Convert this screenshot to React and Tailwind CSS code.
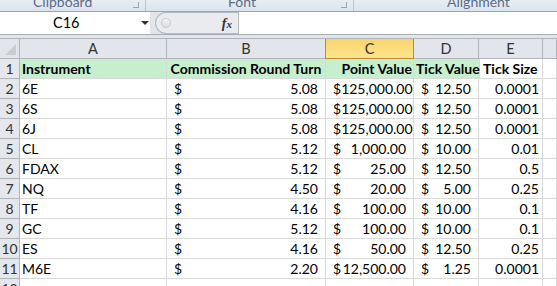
const rows = [
  ["6E", "5.08", "125,000.00", "12.50", "0.0001"],
  ["6S", "5.08", "125,000.00", "12.50", "0.0001"],
  ["6J", "5.08", "125,000.00", "12.50", "0.0001"],
  ["CL", "5.12", "1,000.00", "10.00", "0.01"],
  ["FDAX", "5.12", "25.00", "12.50", "0.5"],
  ["NQ", "4.50", "20.00", "5.00", "0.25"],
  ["TF", "4.16", "100.00", "10.00", "0.1"],
  ["GC", "5.12", "100.00", "10.00", "0.1"],
  ["ES", "4.16", "50.00", "12.50", "0.25"],
  ["M6E", "2.20", "12,500.00", "1.25", "0.0001"],
];

const cols = "grid grid-cols-[20px_147px_159px_88px_65px_64px_1fr]";
const cell = "h-[20px] border-r border-b border-[#d9d9d9] flex items-center overflow-visible whitespace-nowrap";
const rowHead =
  "h-[20px] border-r border-b border-[#b1b5ba] bg-[#e4e7ec] flex items-center justify-center text-[#333]";

function Money({ v }) {
  return (
    <div className={cell + " justify-between pl-[7px] pr-[7px]"}>
      <span>$</span>
      <span>{v}</span>
    </div>
  );
}

function App() {
  return (
    <div className="w-[557px] h-[286px] overflow-hidden bg-white font-['Lato',sans-serif] text-[14px] text-black">
      {/* ribbon group labels, cut off at the top */}
      <div className="h-[12px] flex bg-gradient-to-b from-[#e9eef5] to-[#dbe3ee] border-b border-[#9aa5b5] overflow-hidden text-[#5a6b86] text-[14px] leading-none">
        <div className="w-[146px] flex border-r border-[#b8c3d2] relative">
          <span className="pl-[33px] -mt-[5px]">Clipboard</span>
          <span className="absolute right-[6px] top-[2px] w-[6px] h-[6px] border-r border-b border-[#9aa5b5]"></span>
        </div>
        <div className="w-[208px] flex border-r border-[#b8c3d2] relative">
          <span className="pl-[82px] -mt-[5px]">Font</span>
          <span className="absolute right-[6px] top-[2px] w-[6px] h-[6px] border-r border-b border-[#9aa5b5]"></span>
        </div>
        <div className="flex-1 flex">
          <span className="pl-[93px] -mt-[5px]">Alignment</span>
        </div>
      </div>

      {/* formula bar */}
      <div className="h-[23px] flex bg-[#e2e6eb] border-b border-[#a7adb6]">
        <div className="w-[150px] bg-white flex items-center relative">
          <span className="pl-[53px] text-[14.5px]">C16</span>
          <span className="absolute left-[141px] top-[9px] w-0 h-0 border-l-[4px] border-r-[4px] border-t-[4px] border-l-transparent border-r-transparent border-t-[#333]"></span>
        </div>
        <div className="w-[5px]"></div>
        <div className="w-[83px] flex items-center bg-[#e9ebee] rounded-l-full border border-r-0 border-[#b3b9c2]">
          <span className="ml-[5px] w-[10px] h-[10px] rounded-full bg-gradient-to-b from-[#f4f5f7] to-[#d8dbe0] border border-[#c6cad0]"></span>
          <span className="ml-auto mr-[6px] font-['Liberation_Serif',serif] italic font-bold text-[14px] text-[#333]">
            f<span className="text-[11px]">x</span>
          </span>
        </div>
        <div className="flex-1 bg-white border-l border-[#b3b9c2]"></div>
      </div>

      <div className="h-[3px] bg-[#e2e6eb]"></div>

      {/* column headers */}
      <div className={cols + " border-t border-[#b1b5ba] bg-[#e2e5ea] text-[#333] text-[14.5px]"}>
        <div className="h-[20px] border-r border-b border-[#b1b5ba] relative bg-[#e2e5ea]">
          <span className="absolute right-[3px] bottom-[3px] w-0 h-0 border-b-[11px] border-l-[11px] border-b-[#c9ccd1] border-l-transparent"></span>
        </div>
        {["A", "B"].map((c) => (
          <div key={c} className="h-[20px] border-r border-b border-[#b1b5ba] flex items-center justify-center">
            {c}
          </div>
        ))}
        <div className="h-[20px] border border-t-0 border-[#c28a2e] bg-gradient-to-b from-[#f9d46c] to-[#ffe58f] flex items-center justify-center -ml-px">
          C
        </div>
        {["D", "E", ""].map((c, i) => (
          <div key={i} className="h-[20px] border-r border-b border-[#b1b5ba] flex items-center justify-center">
            {c}
          </div>
        ))}
      </div>

      {/* header row */}
      <div className={cols}>
        <div className={rowHead}>1</div>
        <div className={cell + " bg-[#c6efce] font-bold pl-[2px]"}>Instrument</div>
        <div className={cell + " bg-[#c6efce] font-bold justify-center"}>Commission Round Turn</div>
        <div className={cell + " bg-[#c6efce] font-bold justify-end pr-[1px]"}>Point Value</div>
        <div className={cell + " bg-[#c6efce] font-bold pl-[2px] border-r-0 z-10"}>Tick Value</div>
        <div className={cell + " font-bold pl-[3px] border-l border-[#d9d9d9]"}>Tick Size</div>
        <div className={cell}></div>
      </div>

      {rows.map((r, i) => (
        <div key={i} className={cols}>
          <div className={rowHead}>{i + 2}</div>
          <div className={cell + " pl-[2px]"}>{r[0]}</div>
          <Money v={r[1]} />
          <Money v={r[2]} />
          <Money v={r[3]} />
          <div className={cell + " justify-end pr-[3px]"}>{r[4]}</div>
          <div className={cell}></div>
        </div>
      ))}

      <div className={cols}>
        <div className={rowHead}>12</div>
        <div className={cell}></div>
        <div className={cell}></div>
        <div className={cell}></div>
        <div className={cell}></div>
        <div className={cell}></div>
        <div className={cell}></div>
      </div>
    </div>
  );
}

export default App;
